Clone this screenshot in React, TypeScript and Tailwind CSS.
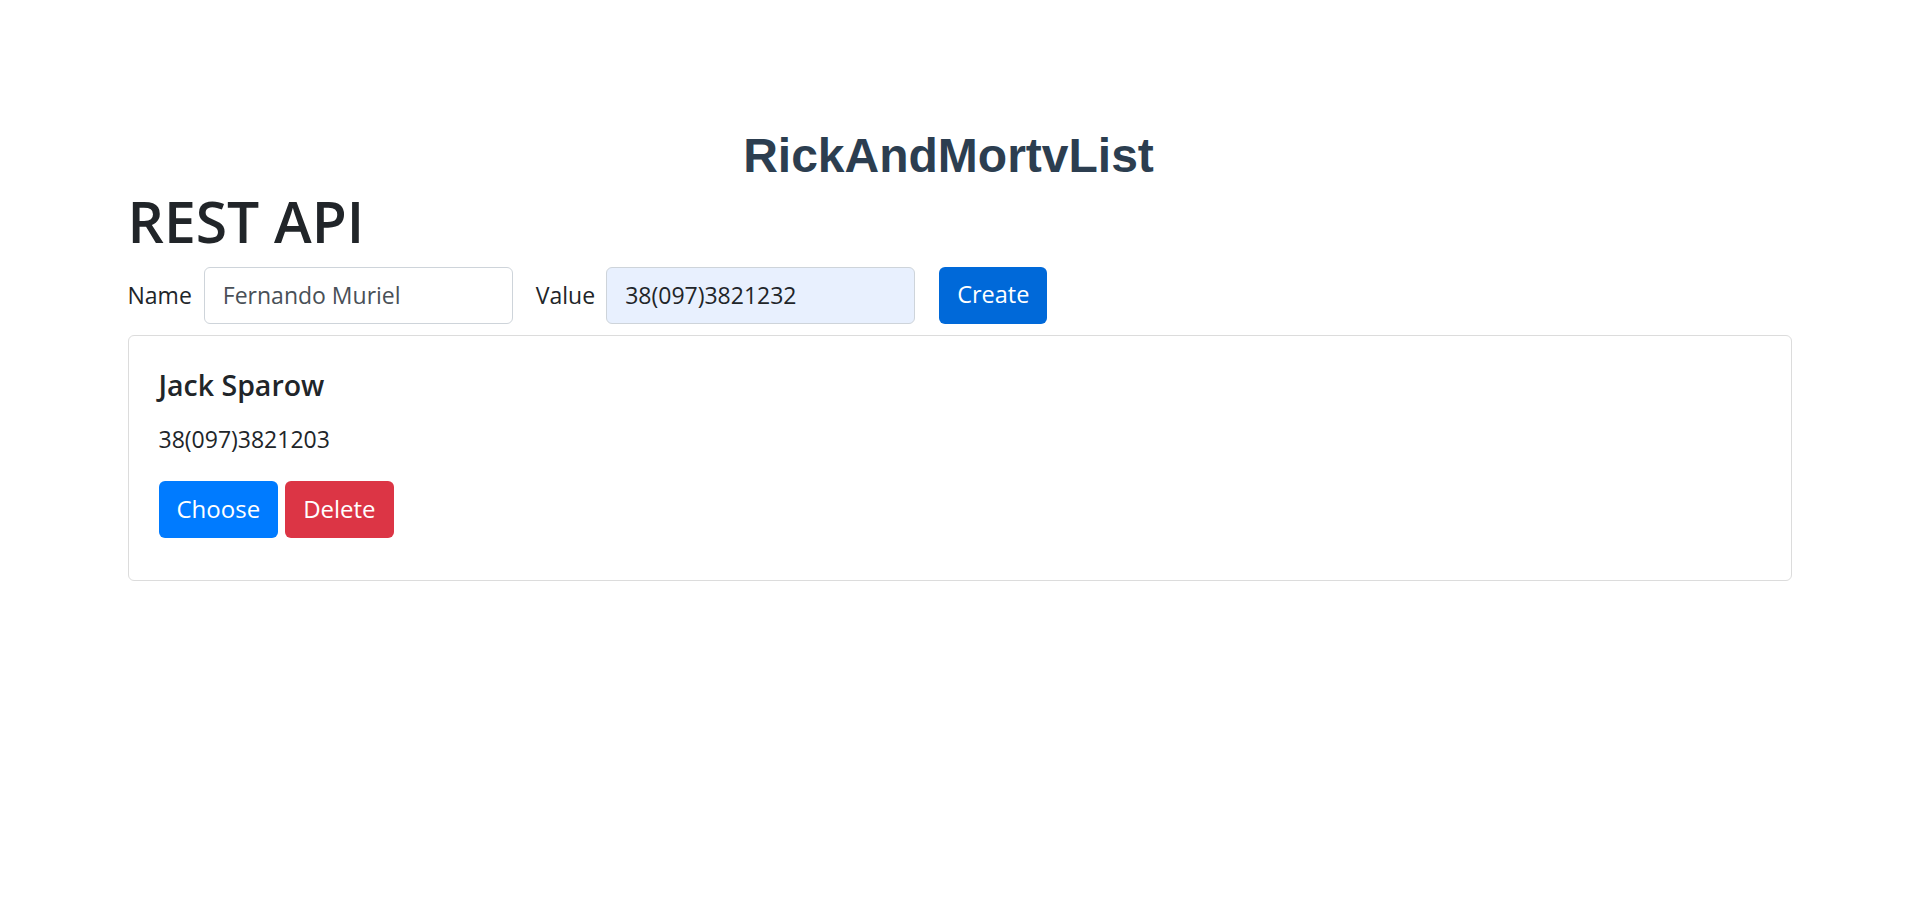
import React from "react";

const sans = "font-['Open_Sans','Noto_Sans',sans-serif]";

export default function App() {
  return (
    <div className={`min-h-screen bg-white text-[#212529] ${sans}`}>
      {/* Vue app heading */}
      <div className="pt-[127px] pr-[22px] text-center">
        <h1 className="font-['Liberation_Sans',Arial,sans-serif] text-[48px] font-bold leading-[57.6px] text-[#2c3e50]">
          RickAndMortvList
        </h1>
      </div>

      <div className="mx-auto w-[1664px]">
        <h1 className="mb-[10px] text-[57px] font-semibold leading-[72px]">REST API</h1>

        {/* Create form */}
        <form className="flex items-center" onSubmit={(e) => e.preventDefault()}>
          <label className="mr-[12px] text-[23px] leading-[36px]">Name</label>
          <input
            defaultValue="Fernando Muriel"
            className="h-[57px] w-[309px] rounded-[6px] border-[1.5px] border-[#ced4da] bg-white px-[18px] text-[23px] text-[#495057] outline-none"
          />
          <label className="ml-[23px] mr-[11px] text-[23px] leading-[36px]">Value</label>
          <input
            defaultValue="38(097)3821232"
            className="h-[57px] w-[309px] rounded-[6px] border-[1.5px] border-[#ced4da] bg-[#e8f0fe] px-[18px] text-[23px] text-[#212529] outline-none"
          />
          <button className="ml-[24px] h-[57px] rounded-[6px] bg-[#0069d9] px-[18px] text-[23.5px] text-white">
            Create
          </button>
        </form>

        {/* Item list */}
        <div className="mt-[11px] rounded-[6px] border-[1.5px] border-[#dcdcdc] px-[30px] pt-[31px] pb-[42px]">
          <h5 className="mb-[18px] text-[28.5px] font-semibold leading-[36px]">Jack Sparow</h5>
          <p className="mb-[24px] text-[23px] leading-[36px]">38(097)3821203</p>
          <div className="flex gap-[7px]">
            <button className="h-[57px] rounded-[6px] bg-[#007bff] px-[18px] text-[24px] text-white">Choose</button>
            <button className="h-[57px] rounded-[6px] bg-[#dc3545] px-[18px] text-[24px] text-white">Delete</button>
          </div>
        </div>
      </div>
    </div>
  );
}
